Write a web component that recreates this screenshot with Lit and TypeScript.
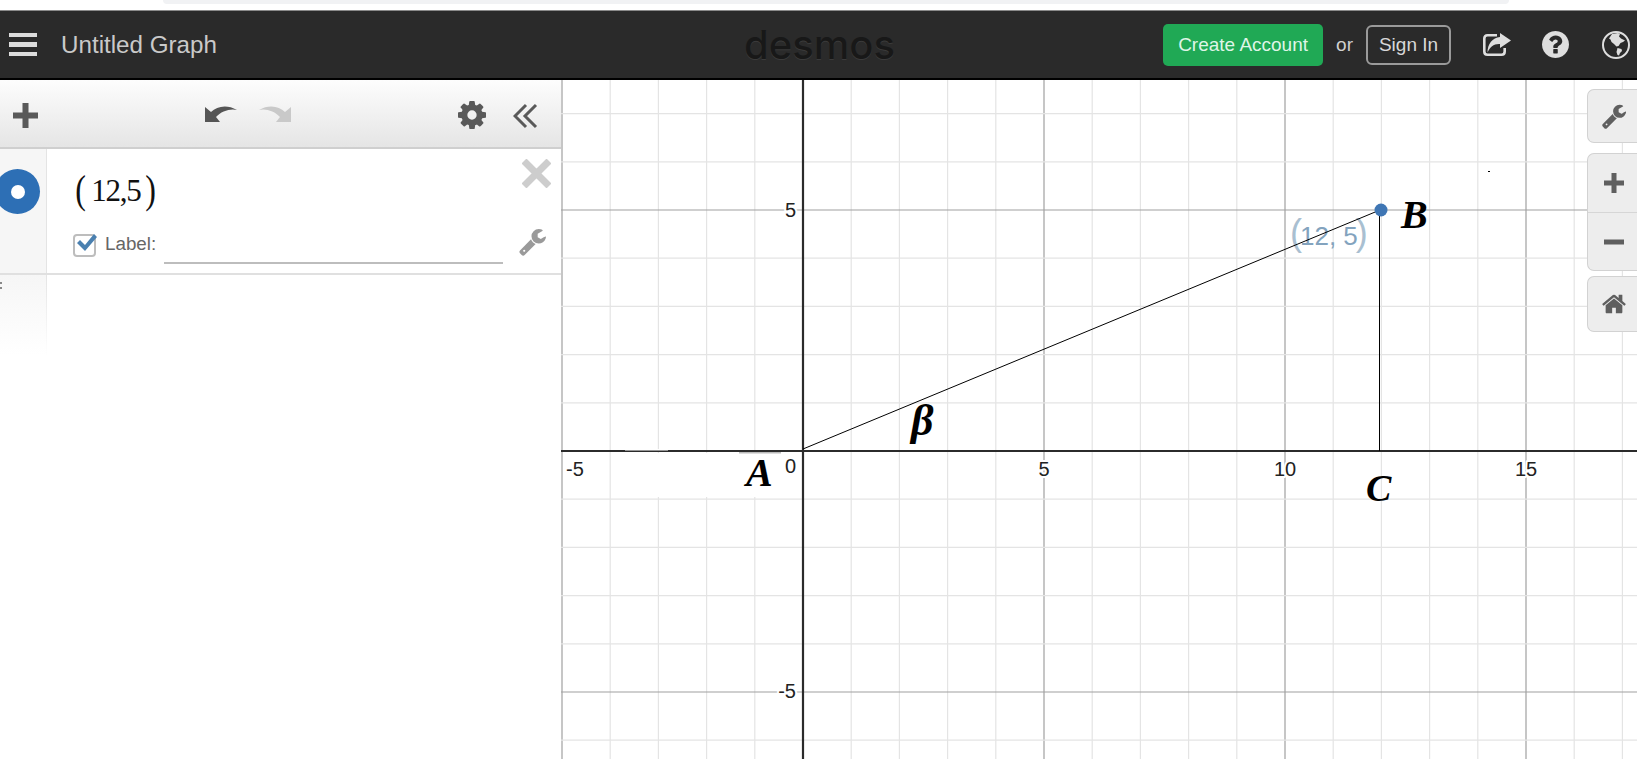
import { LitElement, html, css, svg } from "lit";
import { customElement } from "lit/decorators.js";

const WRENCH = "M448 1472q0-26-19-45t-45-19-45 19-19 45 19 45 45 19 45-19 19-45zm644-420l-682 682q-37 37-90 37-52 0-90-37l-106-108q-38-36-38-90 0-53 38-91l681-681q39 98 114.5 173.5t173.5 114.5zm634-435q0 39-23 106-47 134-164.5 217.5t-258.5 83.5q-185 0-316.5-131.5t-131.5-316.5 131.5-316.5 316.5-131.5q58 0 121.5 16.5t107.5 46.5q16 11 16 28t-16 28l-293 169v224l193 107q5-3 79-48.5t135.5-81 70.5-35.5q15 0 23.5 10t8.5 25z";
const GEAR = "M1152 896q0-106-75-181t-181-75-181 75-75 181 75 181 181 75 181-75 75-181zm512-109v222q0 12-8 23t-20 13l-185 28q-19 54-39 91 35 50 107 138 10 12 10 25t-9 23q-27 37-99 108t-94 71q-12 0-26-9l-138-108q-44 23-91 38-16 136-29 186-7 28-36 28h-222q-14 0-24.5-8.5t-11.5-21.5l-28-184q-49-16-90-37l-141 107q-10 9-25 9-14 0-25-11-126-114-165-168-7-10-7-23 0-12 8-23 15-21 51-66.5t54-70.5q-27-50-41-99l-183-27q-13-2-21-12.5t-8-23.5v-222q0-12 8-23t19-13l186-28q14-46 39-92-40-57-107-138-10-12-10-24 0-10 9-23 26-36 98.5-107.5t94.5-71.5q13 0 26 10l138 107q44-23 91-38 16-136 29-186 7-28 36-28h222q14 0 24.5 8.5t11.5 21.5l28 184q49 16 90 37l142-107q9-9 24-9 13 0 25 10 129 119 165 170 7 8 7 22 0 12-8 23-15 21-51 66.5t-54 70.5q26 50 41 98l183 28q13 2 21 12.5t8 23.5z";
const HOME = "M1472 992v480q0 26-19 45t-45 19h-384v-384h-256v384h-384q-26 0-45-19t-19-45v-480q0-1 .5-3t.5-3l575-474 575 474q1 2 1 6zm223-69l-62 74q-8 9-21 11h-3q-13 0-21-7l-692-577-692 577q-12 8-24 7-13-2-21-11l-62-74q-8-10-7-23.5t11-21.5l719-599q32-26 76-26t76 26l244 204v-195q0-14 9-23t23-9h192q14 0 23 9t9 23v408l219 182q10 8 11 21.5t-7 23.5z";
const HELP = "M1024 1376v-192q0-14-9-23t-23-9h-192q-14 0-23 9t-9 23v192q0 14 9 23t23 9h192q14 0 23-9t9-23zm256-672q0-88-55.5-163t-138.5-116-170-41q-243 0-371 213-15 24 8 42l132 100q7 6 19 6 16 0 25-12 53-68 86-92 34-24 86-24 48 0 85.5 26t37.5 59q0 38-20 61t-68 45q-63 28-115.5 86.5t-52.5 125.5v36q0 14 9 23t23 9h192q14 0 23-9t9-23q0-19 21.5-49.5t54.5-49.5q32-18 49-28.5t46-35 44.5-48 28-60.5 12.5-81zm384 192q0 209-103 385.5t-279.5 279.5-385.5 103-385.5-103-279.5-279.5-103-385.5 103-385.5 279.5-279.5 385.5-103 385.5 103 279.5 279.5 103 385.5z";
const HIST = "M0 3 6 8C12 2 22 0 32 6 26 4 16 7 11 13l4 5H0z";

const UNIT = 48.2;
const OX = 803;
const OY = 451;

@customElement("graph-canvas")
class GraphCanvas extends LitElement {
  static styles = css`
    :host { display: block; flex: 1; min-width: 0; position: relative; overflow: hidden; background: #fff; }
    svg { display: block; width: 100%; height: 100%; }
    .minor { stroke: #e4e4e4; stroke-width: 1.2; }
    .major { stroke: #a0a0a0; stroke-width: 1.2; }
    .axis { stroke: #2b2b2b; stroke-width: 2.2; }
    .seg { stroke: #000; stroke-width: 1; fill: none; }
    .tick { font: 20px "Liberation Sans", Arial, sans-serif; fill: #222; paint-order: stroke; stroke: #fff; stroke-width: 4px; stroke-linejoin: round; }
    .coord { font: 26px "Liberation Sans", Arial, sans-serif; fill: #83a3be; }
    .coord .p { font-size: 36px; fill: #a9bfd1; }
    .mark { font: italic 700 40px "Liberation Serif", "Times New Roman", serif; fill: #000; }
    .beta { font-size: 44px; }
    .cee { font-size: 38px; }
    .side { position: absolute; top: 9px; right: 0; width: 50px; display: flex; flex-direction: column; }
    .box { background: #ededed; border: 1.5px solid #d2d2d2; border-right: 0; border-radius: 7px 0 0 7px; display: flex; flex-direction: column; box-sizing: border-box; }
    .zoom { margin-top: 10px; }
    .homebox { margin-top: 5px; }
    .cell { height: 52px; display: flex; align-items: center; padding-left: 13px; box-sizing: border-box; }
    .cell + .cell { border-top: 1px solid #d6d6d6; }
    .cell svg { display: block; width: 26px; height: 26px; fill: #5f5f5f; }
    .zoom-cell { height: 58px; }
    .home-cell { height: 54px; }
  `;

  render() {
    const xs: number[] = [];
    for (let i = -5; i <= 17; i++) xs.push(i);
    const ys: number[] = [];
    for (let i = -6; i <= 7; i++) ys.push(i);
    return html`
      <svg viewBox="561 80 1076 679" xmlns="http://www.w3.org/2000/svg">
        ${xs.map((i) => {
          const x = OX + i * UNIT;
          return i === 0 ? null : svg`<line class=${i % 5 === 0 ? "major" : "minor"} x1=${x} x2=${x} y1="80" y2="759"></line>`;
        })}
        ${ys.map((i) => {
          const y = OY - i * UNIT;
          return i === 0 ? null : svg`<line class=${i % 5 === 0 ? "major" : "minor"} x1="561" x2="1637" y1=${y} y2=${y}></line>`;
        })}
        <rect x="625" y="453" width="148" height="44" fill="#fff"></rect>
        <line class="axis" x1="803" x2="803" y1="80" y2="759"></line>
        <line class="axis" x1="561" x2="1637" y1="451" y2="451"></line>
        <rect x="625" y="449" width="43" height="1.5" fill="#fff"></rect>
        <rect x="739" y="452" width="42" height="1.5" fill="#bbb"></rect>

        <text class="tick" x="566" y="476">-5</text>
        <text class="tick" x="785" y="473">0</text>
        <text class="tick" x="1044" y="476" text-anchor="middle">5</text>
        <text class="tick" x="1285" y="476" text-anchor="middle">10</text>
        <text class="tick" x="1526" y="476" text-anchor="middle">15</text>
        <text class="tick" x="796" y="217" text-anchor="end">5</text>
        <text class="tick" x="796" y="698" text-anchor="end">-5</text>

        <text class="coord" x="1290" y="245"><tspan class="p">(</tspan><tspan dx="-2">12, 5</tspan><tspan class="p" dx="-2">)</tspan></text>
        <line class="seg" x1="803" y1="449" x2="1380" y2="210"></line>
        <line class="seg" x1="1379.5" y1="210" x2="1379.5" y2="451"></line>
        <circle cx="1381" cy="210" r="6.5" fill="#3f76b4"></circle>
        <rect x="1488" y="171" width="2" height="1" fill="#000"></rect>

        <text class="mark" x="746" y="486">A</text>
        <text class="mark" x="1401" y="228">B</text>
        <text class="mark cee" x="1366" y="501">C</text>
        <text class="mark beta" x="911" y="435">β</text>
      </svg>
      <div class="side">
        <div class="box">
          <div class="cell"><svg viewBox="0 0 1792 1792"><path d=${WRENCH}></path></svg></div>
        </div>
        <div class="box zoom">
          <div class="cell zoom-cell">
            <svg viewBox="0 0 26 26"><path d="M10.5 3h5v7.5H23v5h-7.500V23h-5v-7.500H3v-5h7.500z"></path></svg>
          </div>
          <div class="cell zoom-cell">
            <svg viewBox="0 0 26 26"><path d="M3 10.500h20v5H3z"></path></svg>
          </div>
        </div>
        <div class="box homebox">
          <div class="cell home-cell"><svg viewBox="0 0 1792 1792"><path d=${HOME}></path></svg></div>
        </div>
      </div>
    `;
  }
}

@customElement("app-root")
export class AppRoot extends LitElement {
  static styles = css`
    :host { display: block; width: 1637px; height: 759px; overflow: hidden; background: #fff; font-family: "Liberation Sans", Arial, sans-serif; }
    .page { display: flex; flex-direction: column; height: 759px; }
    .strip { height: 10px; flex: none; background: #fff; padding: 0 128px 0 163px; box-sizing: border-box; }
    .strip div { height: 4px; background: #f1f2f4; border-radius: 0 0 8px 8px; }

    .top { height: 70px; flex: none; box-sizing: border-box; background: #2a2a2a; border-top: 1px solid #8a8a8a; border-bottom: 2px solid #000; display: flex; align-items: center; padding: 0 7px 0 9px; }
    .top-left, .top-right { flex: 1; display: flex; align-items: center; min-width: 0; }
    .top-right { justify-content: flex-end; }
    .burger { width: 28px; display: flex; flex-direction: column; gap: 5px; }
    .burger i { display: block; height: 4.500px; background: #dcdcdc; }
    .title { margin-left: 24px; font-size: 24.200px; color: #c9c9c9; }
    .logo { font: 500 40px Inter, Lato, sans-serif; color: #181818; text-shadow: 0 1px 0 #3b3b3b; line-height: 1; }
    .create { width: 160px; height: 42px; background: #20a955; color: #dff5e7; border-radius: 5px; font-size: 19px; display: flex; align-items: center; justify-content: center; }
    .or { margin: 0 13px; color: #d0d0d0; font-size: 19px; }
    .signin { width: 85px; height: 40px; box-sizing: border-box; border: 2px solid #9a9a9a; border-radius: 6px; color: #d8d8d8; font-size: 19px; display: flex; align-items: center; justify-content: center; }
    .ico { display: block; fill: #dedede; }
    .share { width: 29px; height: 24px; margin-left: 31px; }
    .help { width: 27px; height: 27px; margin-left: 31px; }
    .globe { width: 28px; height: 28px; margin-left: 33px; }

    .main { flex: 1; display: flex; min-height: 0; }
    .panel { width: 561px; flex: none; display: flex; flex-direction: column; background: #fff; }
    .tools { height: 69px; flex: none; box-sizing: border-box; background: linear-gradient(#fdfdfd, #e5e5e5); border-bottom: 2px solid #cfcfcf; display: flex; align-items: center; padding: 3px 23px 0 13px; }
    .plus { width: 25px; height: 25px; fill: #595959; display: block; }
    .history { margin-left: 167px; margin-top: -4px; display: flex; gap: 22px; }
    .history svg { width: 32px; height: 18px; display: block; }
    .undo { fill: #555; }
    .redo { fill: #c9c9c9; transform: scaleX(-1); }
    .gear { margin-left: auto; width: 28px; height: 28px; fill: #595959; display: block; }
    .collapse { margin-left: 27px; margin-top: 2px; width: 25px; height: 28px; fill: none; stroke: #595959; stroke-width: 3px; display: block; }

    .expr { height: 126px; flex: none; box-sizing: border-box; display: flex; border-bottom: 2px solid #e0e0e0; }
    .gutter { width: 47px; flex: none; box-sizing: border-box; background: #f6f6f6; border-right: 1px solid #e4e4e4; position: relative; }
    .dot { position: absolute; left: -5px; top: 20px; width: 45px; height: 45px; border-radius: 50%; background: #2d6fb5; display: flex; align-items: center; justify-content: center; }
    .dot i { width: 14px; height: 14px; border-radius: 50%; background: #fff; }
    .body { flex: 1; display: flex; flex-direction: column; padding: 16px 9px 0 26px; min-width: 0; position: relative; }
    .math { font: 31px "Liberation Serif", "Times New Roman", serif; color: #111; height: 52px; display: flex; align-items: center; letter-spacing: -1.300px; padding-left: 1px; gap: 4px; }
    .paren { font-size: 40px; line-height: 1; letter-spacing: 0; transform: scaleX(0.8); margin-top: -3px; }
    .close { position: absolute; right: 10px; top: 10px; width: 29px; height: 29px; stroke: #cdcdcd; stroke-width: 7px; display: block; }
    .row { display: flex; height: 35px; margin-top: 12px; }
    .check { width: 24px; height: 25px; flex: none; display: block; margin-top: 3px; }
    .lab { margin-left: 8px; font-size: 18.800px; color: #666; align-self: center; margin-top: -5px; }
    .field { margin-left: 8px; width: 339px; height: 26px; align-self: flex-end; box-sizing: border-box; border-bottom: 2px solid #bdbdbd; }
    .tool { margin-left: 15px; margin-top: -2px; width: 29px; height: 29px; fill: #9a9a9a; display: block; }

    .rest { flex: none; display: flex; }
    .fade { width: 47px; height: 80px; box-sizing: border-box; background: linear-gradient(#f6f6f6, #fff); border-right: 1px solid; border-image: linear-gradient(#e4e4e4, #fff) 1; position: relative; }
    .fade i { position: absolute; left: 0; width: 1.500px; height: 2px; background: #888; }
  `;

  render() {
    return html`
      <div class="page">
        <div class="strip"><div></div></div>
        <header class="top">
          <div class="top-left">
            <div class="burger"><i></i><i></i><i></i></div>
            <div class="title">Untitled Graph</div>
          </div>
          <div class="logo">desmos</div>
          <div class="top-right">
            <div class="create">Create Account</div>
            <div class="or">or</div>
            <div class="signin">Sign In</div>
            <svg class="ico share" viewBox="0 0 29 24">
              <path d="M15 2.300H5.500Q2.300 2.300 2.300 5.500V18.500Q2.300 21.700 5.500 21.700H19.500Q22.700 21.700 22.700 18.500V15" fill="none" stroke="#dedede" stroke-width="2.600"></path>
              <path d="M18 0 29 7.500 18 15V11C12 10.500 8 14 5.500 19.500 5.500 11 10.500 4.500 18 4z"></path>
            </svg>
            <svg class="ico help" viewBox="128 128 1536 1536"><path d=${HELP}></path></svg>
            <svg class="ico globe" viewBox="0 0 28 28">
              <circle cx="14" cy="14" r="13" fill="none" stroke="#dedede" stroke-width="2"></circle>
              <path d="M10 3 16 2 18 3 17 5.500 19 7.500 23 9.500 21 11 18.500 12 16.500 15 14.500 15.500 12 13 9.500 11 8.500 8.500 7 7.500zM15.500 17 19.500 18 20 20 18 22 17 24.500 15.500 24 14.500 21z"></path>
            </svg>
          </div>
        </header>
        <div class="main">
          <aside class="panel">
            <div class="tools">
              <svg class="plus" viewBox="0 0 25 25"><path d="M9.500 0h6v9.500H25v6h-9.500V25h-6v-9.500H0v-6h9.500z"></path></svg>
              <div class="history">
                <svg class="undo" viewBox="0 0 32 18"><path d=${HIST}></path></svg>
                <svg class="redo" viewBox="0 0 32 18"><path d=${HIST}></path></svg>
              </div>
              <svg class="gear" viewBox="128 128 1536 1536"><path d=${GEAR}></path></svg>
              <svg class="collapse" viewBox="0 0 25 28"><path d="M13 3 2 14l11 11M23 3 12 14l11 11"></path></svg>
            </div>
            <div class="expr">
              <div class="gutter"><div class="dot"><i></i></div></div>
              <div class="body">
                <div class="math"><span class="paren">(</span><span>12,5</span><span class="paren">)</span></div>
                <svg class="close" viewBox="0 0 29 29"><path d="M2 2l25 25M27 2 2 27"></path></svg>
                <div class="row">
                  <svg class="check" viewBox="0 0 24 25">
                    <rect x="1" y="3" width="21" height="21" rx="3" fill="#fff" stroke="#bdbdbd" stroke-width="2"></rect>
                    <path d="M4 11l3-3 5 5L21 2l3 3-12 14z" fill="#4a80b0"></path>
                  </svg>
                  <div class="lab">Label:</div>
                  <div class="field"></div>
                  <svg class="tool" viewBox="0 0 1792 1792"><path d=${WRENCH}></path></svg>
                </div>
              </div>
            </div>
            <div class="rest"><div class="fade"><i style="top:7px"></i><i style="top:12px"></i></div></div>
          </aside>
          <graph-canvas></graph-canvas>
        </div>
      </div>
    `;
  }
}
